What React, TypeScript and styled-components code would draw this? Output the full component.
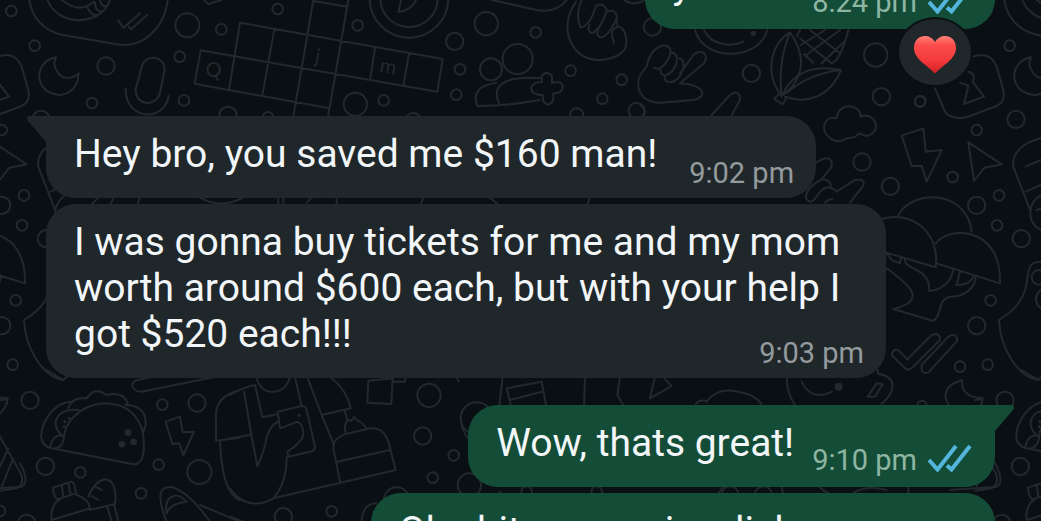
import React from "react";
import styled, { createGlobalStyle, css } from "styled-components";

const colors = {
  wall: "#0a0f13",
  doodle: "#22292d",
  incoming: "#20272a",
  outgoing: "#144d37",
  text: "#f2f6f9",
  incomingMeta: "#949a9d",
  outgoingMeta: "#8fb5a3",
  tick: "#53b5dc",
};

const GlobalStyle = createGlobalStyle`
  * { box-sizing: border-box; }
  html, body { margin: 0; background: ${colors.wall}; }
  body { font-family: Roboto, "Liberation Sans", sans-serif; overflow: hidden; }
`;

const Chat = styled.main`
  position: relative;
  height: 100vh;
  overflow: hidden;
  background: ${colors.wall};
`;

const Wallpaper = styled.svg`
  position: absolute;
  inset: 0;
  width: 100%;
  height: 100%;
  fill: none;
  stroke: ${colors.doodle};
  stroke-width: 6;
  stroke-linecap: round;
  stroke-linejoin: round;
`;

const Thread = styled.ol`
  position: relative;
  display: flex;
  flex-direction: column;
  gap: 6px;
  margin: -53px 0 0;
  padding: 0 46px;
  list-style: none;
`;

const Bubble = styled.li<{ $out?: boolean; $tail?: boolean; $turn?: boolean }>`
  position: relative;
  display: flow-root;
  align-self: ${(p) => (p.$out ? "flex-end" : "flex-start")};
  max-width: min(840px, 100%);
  padding: 15px 22px 9px 28px;
  border-radius: 30px;
  background: ${(p) => (p.$out ? colors.outgoing : colors.incoming)};
  color: ${colors.text};
  font-size: 39px;
  line-height: 46px;
  ${(p) => p.$tail && (p.$out
    ? css`border-top-right-radius: 0;`
    : css`border-top-left-radius: 0;`)}
  ${(p) => p.$turn && css`margin-top: 21px;`}
`;

const Reacted = styled(Bubble)`
  margin-bottom: 81px;
`;

const Meta = styled.span<{ $out?: boolean }>`
  float: right;
  display: flex;
  align-items: center;
  gap: 10px;
  margin: ${(p) => (p.$out ? "24px 0 2px 18px" : "26px 0 0 32px")};
  height: 32px;
  color: ${(p) => (p.$out ? colors.outgoingMeta : colors.incomingMeta)};
  font-size: 29px;
  line-height: 32px;
`;

const Ticks = styled.svg`
  width: 46px;
  height: 28px;
  margin-bottom: 4px;
  fill: none;
  stroke: ${colors.tick};
  stroke-width: 4;
`;

const Tail = styled.svg<{ $out?: boolean }>`
  position: absolute;
  top: 0;
  ${(p) => (p.$out ? "left: 100%;" : "right: 100%;")}
  width: 19px;
  height: 27px;
  fill: ${(p) => (p.$out ? colors.outgoing : colors.incoming)};
  ${(p) => p.$out && "transform: scaleX(-1);"}
`;

const Reaction = styled.button`
  position: absolute;
  right: 22px;
  bottom: -58px;
  display: grid;
  place-items: center;
  width: 76px;
  height: 70px;
  padding: 5px 0 0;
  border: 2px solid ${colors.wall};
  border-radius: 50%;
  background: ${colors.incoming};
`;

type Dot = [number, number, number];

function Sketch({ at, dots = [], spots = [], d, children }: {
  at: [number, number];
  dots?: Dot[];
  spots?: Dot[];
  d: string;
  children?: React.ReactNode;
}) {
  return (
    <g transform={`translate(${at[0]} ${at[1]}) scale(0.33333)`}>
      <path d={d} />
      {dots.map(([x, y, r], i) => <circle key={i} cx={x} cy={y} r={r} />)}
      {spots.map(([x, y, r], i) => (
        <circle key={i} cx={x} cy={y} r={r} fill={colors.doodle} stroke="none" />
      ))}
      {children}
    </g>
  );
}

const TileLetter = styled.text`
  fill: ${colors.doodle};
  stroke: none;
  font: 60px Lato, sans-serif;
`;

function Doodles() {
  return (
    <Wallpaper aria-hidden="true">
      <defs>
        <g id="doodles">
          <Sketch
            at={[0, 0]}
            dots={[[34,33,16],[104,137,16],[562,76,36],[664,88,16],[833,27,16],[539,170,16],[318,198,26],[276,309,16],[552,301,16],[123,358,26],[684,346,26],[804,352,16]]}
            d="M168,172 C110,182 102,250 145,275 C185,300 235,275 236,220 C215,240 185,238 172,215 C162,200 160,190 168,172Z
               M424,205 C432,158 500,165 493,215 L480,278 C468,325 403,315 407,268Z
               M377,265 C375,365 495,365 506,288
               M88,0 C95,50 130,92 185,104 L350,133 C430,148 495,80 503,0
               M140,-5 C160,50 220,78 290,48 C310,35 328,15 330,-5 M180,-5 Q235,45 282,5
               M262,22 Q272,45 290,46 M285,8 Q285,32 302,34 M300,0 Q305,22 318,18
               M355,62 L370,84 L420,40 M387,80 L393,88 L442,44
               M612,0 L625,12 L665,0
               M602,151 L584,251 M720,68 L687,270 M823,88 L787,286 M940,0 L880,350 M1045,0 L984,350
               M1125,145 L1110,240 M1227,160 L1210,258 M1328,177 L1312,275
               M940,3 L1042,20 M720,68 L1328,177 M602,151 L1312,275 M584,251 L988,325"
          >
            <TileLetter x="616" y="230" transform="rotate(10 637 212)">Q</TileLetter>
            <TileLetter x="946" y="190" transform="rotate(10 957 170)">j</TileLetter>
            <TileLetter x="1140" y="220" transform="rotate(10 1167 200)">m</TileLetter>
          </Sketch>

          <Sketch
            at={[340, 0]}
            dots={[[53,76,16],[344,124,26],[439,71,35],[587,97,16],[360,208,16],[349,284,16],[131,301,16],[46,313,35],[692,212,16],[845,239,16],[787,296,16],[937,81,26],[220,364,25],[710,345,20],[890,332,24],[207,-5,118],[207,-5,86],[453,208,33],[533,177,45]]}
            d="M188,-20 L175,36 Q215,30 228,0
               M455,0 L590,30 Q650,40 680,0
               M470,248 C415,255 398,280 412,318 Q500,318 600,300 M478,312 C455,265 480,225 600,235
               M605,228 Q620,208 636,228 L636,248 Q668,240 668,262 Q668,280 640,280 L640,300 Q626,324 610,305 L608,285 Q572,285 574,262 Q580,245 606,246Z
               M708,5 C670,60 680,110 700,140 C740,200 830,185 856,145 C866,110 850,80 835,80 C808,85 815,110 822,128
               M725,0 Q705,50 722,82 Q748,80 768,18 Q790,5 800,30 Q790,75 760,98 Q740,100 748,75 M800,35 Q830,25 830,55 Q805,112 780,112 Q765,105 778,80 M830,60 L833,80
               M853,0 Q880,20 915,0"
          />

          <Sketch
            at={[640, 0]}
            dots={[[334,220,26],[707,165,35],[724,290,26],[841,303,16]]}
            spots={[[340,100,8]]}
            d="M450,97 C395,130 370,220 425,288 C480,250 510,180 450,97 M450,97 Q412,190 425,288
               M425,290 C450,230 500,190 603,210 C570,290 500,315 435,290 M440,278 Q510,220 603,210
               M415,284 L403,297 L428,313 L440,292
               M470,110 L480,90 M625,90 C615,130 600,180 575,190 M510,90 L600,160 M480,115 L575,190 M492,162 L520,188
               M600,90 L495,168 M555,90 L482,135 M612,125 L545,190
               M165,90 C190,185 355,185 382,90 M192,90 C215,140 280,140 310,125
               M998,170 C1040,155 1060,175 1070,200 L1090,270 C1095,300 1085,310 1070,318 L985,350 C950,360 925,350 915,335 L885,265
               M960,248 Q982,255 985,258 L972,312 L1032,290 L998,245 Q1008,220 985,215
               M20,200 C-30,250 0,310 60,308 L160,300 C205,290 195,255 120,250 L192,190 C210,160 180,145 160,165 L120,220
               M20,200 C30,140 80,120 92,150 C90,185 55,220 42,202 M92,158 C125,155 110,215 80,225 Q60,228 62,210 M118,175 C145,180 125,245 90,247 Q70,245 75,228
               M215,345 L270,285 Q300,265 300,300 L275,345 M0,315 Q20,330 12,345"
          />

          <Sketch
            at={[800, 100]}
            dots={[[186,186,26],[271,259,26],[458,231,16],[530,316,26],[597,286,16],[591,376,16],[664,416,26],[530,90,16],[572,601,16],[530,677,26],[480,800,16],[563,794,16],[360,5,16],[717,532,22],[740,597,32]]}
            spots={[[116,860,12]]}
            d="M110,55 C115,5 180,10 182,50 C225,35 250,95 200,108 L178,100 Q165,115 140,115 Q115,135 85,110 C60,85 75,45 110,55Z
               M305,107 L370,85 L377,155 L425,150 L380,245 L365,198 L335,198Z
               M505,127 L605,193 L553,203 L522,243Z
               M295,345 C340,265 500,270 515,395
               M245,357 C340,330 420,400 407,502 L260,458
               M407,430 C450,375 605,380 600,550 L410,490
               M260,460 L275,480 L300,490 L302,475 M315,478 C310,510 390,500 388,573 C430,570 455,540 460,508
               M260,505 C320,550 390,600 280,627 L400,663 C430,640 410,600 450,590 C500,590 525,560 527,530 M480,515 L470,555 Q510,555 520,530
               M275,765 Q282,740 300,755 L322,778 L395,705 Q420,695 420,720 L335,805 Q322,815 310,800Z
               M365,795 L445,710 Q470,695 472,722 L385,818 Q362,825 365,795Z
               M723,115 C660,130 635,165 640,200 L692,335 M677,200 L723,180 M677,275 L723,255 M723,285 C680,310 680,370 723,390 M710,330 L725,325
               M723,485 C690,485 685,500 680,550 C670,610 630,640 597,660 C600,740 650,830 715,840
               M5,845 Q35,905 95,875 M232,810 L235,822 C290,830 290,870 245,912 M230,850 L248,853 L225,890 L203,890Z
               M487,840 C430,855 430,890 445,913 M487,840 Q480,890 548,895 L545,913
               M45,190 Q98,155 95,200 L65,238 Q15,265 18,295 Q28,312 42,300 L60,275 Q85,250 110,275 L165,240 Q200,235 188,260 L150,308 M65,238 Q95,240 92,258 M75,308 Q80,300 97,297"
          />

          <Sketch
            at={[0, 370]}
            dots={[[90,91,26],[487,104,16],[591,99,26],[136,289,26],[241,307,16],[476,284,16],[598,306,36],[423,370,16],[80,460,26],[0,423,16]]}
            spots={[[384,188,10],[401,216,10],[366,223,10],[195,155,5],[208,145,5],[193,170,5]]}
            d="M155,235 L400,283 Q425,283 430,250 C442,150 390,100 310,100 C230,108 192,165 192,205 Q185,240 155,235 C110,225 118,175 150,130 Q180,95 215,95
               M205,115 Q215,80 260,85 Q285,48 320,75 Q370,62 383,100 M375,105 Q440,105 437,165 L430,185
               M185,195 C150,165 165,115 235,120 M150,232 Q160,190 190,198
               M497,155 L540,140 L548,187 L582,185 L550,255 L537,220 L517,222Z
               M0,200 L62,310 Q75,340 50,355 L0,362 M0,290 L25,235 M5,350 L40,265 M0,90 L22,88 Q20,110 0,130
               M160,352 L215,335 Q225,340 228,370 L172,388 Q158,375 160,352 M185,345 L190,380 M205,340 L212,375
               M180,388 Q150,405 155,450 L270,415 Q265,385 230,375
               M265,380 C290,320 325,318 340,345 Q350,370 345,402 L270,420 M285,350 L305,360 M275,378 L295,390 M322,410 L335,455 M342,402 L355,455
               M500,455 C470,380 475,345 520,352 Q570,370 630,455 M500,430 C490,380 530,360 560,395 Q510,400 500,430 M600,405 L720,455
               M720,60 Q640,80 648,150 L648,212 L720,203 M660,215 C665,330 690,380 720,390
               M640,22 L425,65 C395,65 385,35 415,30 L450,22 M140,0 L190,30 L205,15"
          />

          <Sketch
            at={[230, 370]}
            dots={[[597,76,35],[578,198,26],[671,256,16],[608,323,16],[718,345,35],[160,440,26],[305,424,16],[500,390,38],[740,145,48]]}
            spots={[[207,136,5]]}
            d="M0,75 Q30,55 75,45 M80,22 C90,80 165,80 180,22
               M42,65 L65,200 L82,288 Q105,240 110,200 Q125,160 145,155 M0,205 L62,195 M75,45 L97,142 L140,133 M195,22 L215,108
               M143,125 L215,108 Q228,108 230,120 L255,230 Q255,242 240,245 L175,260 L172,245 Q220,215 220,190 Q215,145 190,160 L150,175Z
               M170,262 Q170,340 130,385 C80,415 30,400 0,355
               M130,385 L497,300 L475,215 Q460,170 420,175 L345,193 Q308,205 310,235 L330,335
               M232,22 L275,135 L310,220 M275,135 L362,115 Q350,60 305,25 M322,275 L480,240
               M345,125 L352,150 Q340,170 348,190 M352,150 Q370,155 372,140 Q378,152 395,158 L412,178
               M415,32 L488,25 L484,102 L412,98Z M488,35 L525,35 L527,22 M680,22 L686,34 M692,140 Q690,180 720,210
               M395,450 Q400,400 440,400 M0,440 L40,455"
          />

          <Sketch
            at={[480, 370]}
            d="M68,20 L58,105 M80,55 L185,35 L198,105 M80,55 L92,105 M90,90 L185,65 M315,20 L312,105 M420,20 L412,75 L430,105
               M525,20 L510,85 L575,48 L548,20 M645,105 Q660,85 680,95 Q710,50 775,65 Q830,75 845,105 M920,20 Q920,70 945,105
               M850,0 L865,15 L880,0"
          />
          <Sketch
            at={[800, 370]}
            dots={[[366,106,14]]}
            d="M585,280 Q615,335 590,350 L450,360 M60,350 Q70,365 85,368 M160,368 Q200,345 260,360 M325,350 V370"
          />
          <Sketch
            at={[500, 485]}
            dots={[[80,20,16],[290,20,16],[690,30,26],[790,30,26]]}
            d="M0,20 L8,30 M650,30 L670,5 M850,30 L845,5"
          />
          <Sketch
            at={[90, 196]}
            d="M0,30 L25,5 M60,25 Q70,15 68,5 M140,30 L150,5 M330,5 Q390,40 460,5 M565,0 V30 M580,0 V30 M650,20 L665,5 M740,0 V30 M1000,5 L990,30 M1200,5 L1230,30 M1500,5 L1490,30"
          />
        </g>
      </defs>
      <use href="#doodles" />
      <use href="#doodles" x="-975" />
      <use href="#doodles" x="975" />
    </Wallpaper>
  );
}

function Stamp({ time, out }: { time: string; out?: boolean }) {
  return (
    <Meta $out={out}>
      <time>{time}</time>
      {out && (
        <Ticks viewBox="0 0 46 28" role="img" aria-label="Read">
          <path d="M2 16 L10.500 25.500 L29 2 M20 21.500 L24.500 25.500 L43 2" />
        </Ticks>
      )}
    </Meta>
  );
}

function BubbleTail({ out }: { out?: boolean }) {
  return (
    <Tail $out={out} viewBox="0 0 19 27" aria-hidden="true">
      <path d="M19 0 H3 Q-1 0 0 3 L1 5 L19 26Z" />
    </Tail>
  );
}

function Heart() {
  return (
    <svg width="44" height="40" viewBox="0 0 44 40" aria-hidden="true">
      <defs>
        <linearGradient id="heartFill" x1="0" y1="0" x2="0" y2="1">
          <stop offset="0" stopColor="#ff8078" />
          <stop offset="0.25" stopColor="#fb4c4b" />
          <stop offset="0.65" stopColor="#f53a3c" />
          <stop offset="1" stopColor="#cf2124" />
        </linearGradient>
      </defs>
      <path
        fill="url(#heartFill)"
        d="M22 7 C19 2 15 1 12 1 C5 1 1 6 1 13 C1 24 14 30 22 38.500 C30 30 43 24 43 13 C43 6 39 1 32 1 C29 1 25 2 22 7Z"
      />
    </svg>
  );
}

export default function App() {
  return (
    <>
      <GlobalStyle />
      <Chat>
        <Doodles />
        <Thread>
          <Reacted $out>
            yes sir!
            <Stamp time="8:24 pm" out />
            <Reaction type="button" aria-label="Heart reaction">
              <Heart />
            </Reaction>
          </Reacted>
          <Bubble $tail>
            <BubbleTail />
            Hey bro, you saved me $160 man!
            <Stamp time="9:02 pm" />
          </Bubble>
          <Bubble>
            I was gonna buy tickets for me and my mom worth around $600 each, but with your help I got $520 each!!!
            <Stamp time="9:03 pm" />
          </Bubble>
          <Bubble $out $tail $turn>
            <BubbleTail out />
            Wow, thats great!
            <Stamp time="9:10 pm" out />
          </Bubble>
          <Bubble $out>
            Oh shit, my car is a lick
            <Stamp time="9:10 pm" out />
          </Bubble>
        </Thread>
      </Chat>
    </>
  );
}
